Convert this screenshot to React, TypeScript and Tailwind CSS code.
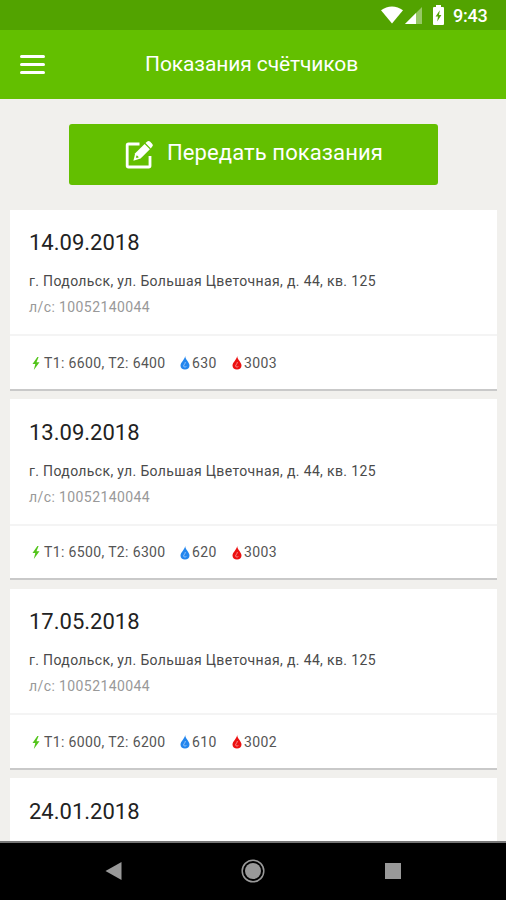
import React from "react";

type Reading = {
  date: string;
  values?: { t1: number; t2: number; cold: number; hot: number };
};

const readings: Reading[] = [
  { date: "14.09.2018", values: { t1: 6600, t2: 6400, cold: 630, hot: 3003 } },
  { date: "13.09.2018", values: { t1: 6500, t2: 6300, cold: 620, hot: 3003 } },
  { date: "17.05.2018", values: { t1: 6000, t2: 6200, cold: 610, hot: 3002 } },
  { date: "24.01.2018" },
];

function Drop({ className }: { className: string }) {
  return (
    <svg viewBox="0 0 10 14" className={`h-[14px] w-[10px] shrink-0 ${className}`}>
      <path d="M5.2 0C5.2 3.6 9.5 6.2 9.5 9.5C9.5 12 7.6 13.6 5 13.6S.5 12 .5 9.5C.5 6.6 4.4 4 5.2 0Z" fill="currentColor" />
      <path d="M5.4 6C5.2 8 3.6 8.6 3.6 10.2C3.9 11.2 5.6 11.2 6.4 10.5" fill="none" stroke="white" strokeWidth="0.9" opacity="0.55" />
    </svg>
  );
}

function StatusBar() {
  return (
    <div className="flex h-[30px] shrink-0 items-center bg-[#52a300] pl-[381px] text-white">
      <svg viewBox="0 0 22 18" className="h-[18px] w-[22px]">
        <path d="M0 4.3C6.5-.9 15.5-.9 22 4.3L11 17.5Z" fill="currentColor" />
      </svg>
      <svg viewBox="0 0 18 17" className="ml-[2px] h-[17px] w-[18px]">
        <path d="M17 0V17H0Z" fill="currentColor" opacity="0.4" />
        <path d="M11 6V17H0Z" fill="currentColor" />
      </svg>
      <svg viewBox="0 0 11 20" className="ml-[10px] h-[20px] w-[11px]">
        <path d="M3 0H8V2H10Q11 2 11 3V19Q11 20 10 20H1Q0 20 0 19V3Q0 2 1 2H3Z" fill="currentColor" />
        <path d="M6.8 5.2L2.6 11.5H5L4.2 16.5L8.4 10H6Z" fill="#52a300" />
      </svg>
      <span className="ml-[9px] pt-[2px] text-[18px] font-medium leading-none tracking-[-0.2px]">9:43</span>
    </div>
  );
}

function Card({ date, values }: Reading) {
  return (
    <article className="mb-[8.5px] h-[181px] shrink-0 border-b-2 border-[#c9c9c9] bg-white">
      <div className={`pl-[19px] pt-[20.4px] ${values ? "h-[126.4px] border-b-2 border-[#f4f4f4]" : ""}`}>
        <h2 className="text-[22px] leading-[26px] text-[#222]">{date}</h2>
        {values && (
          <>
            <p className="mt-[15px] whitespace-nowrap text-[14px] leading-[20px] tracking-[0.36px] text-[#4a4a4a]">
              г. Подольск, ул. Большая Цветочная, д. 44, кв. 125
            </p>
            <p className="mt-[6px] text-[14px] leading-[20px] tracking-[0.4px] text-[#999]">л/с: 10052140044</p>
          </>
        )}
      </div>
      {values && (
        <div className="flex h-[52.6px] items-center pl-[22px] pt-[2px] text-[14px] tracking-[0.36px] text-[#555]">
          <svg viewBox="0 0 8 13" className="h-[13px] w-[8px]">
            <path d="M5.4 0L.5 7H3.3L1.8 13L7.5 5.2H4.5L6.6 0Z" fill="#52c41a" />
          </svg>
          <span className="ml-[4px] w-[136px] whitespace-nowrap">T1: {values.t1}, T2: {values.t2}</span>
          <Drop className="text-[#2386ee]" />
          <span className="ml-[2px] w-[40px]">{values.cold}</span>
          <Drop className="text-[#ec1111]" />
          <span className="ml-[2px]">{values.hot}</span>
        </div>
      )}
    </article>
  );
}

export default function App() {
  return (
    <div className="flex h-[900px] w-[506px] flex-col overflow-hidden bg-[#f1f0ed] font-['Roboto','Noto_Sans',sans-serif]">
      <StatusBar />
      <header className="flex h-[69px] shrink-0 items-center bg-[#63bf00] pl-[20px] text-white">
        <div className="flex w-[125px] flex-col gap-[5px]">
          <span className="h-[3px] w-[25px] rounded-full bg-white" />
          <span className="h-[3px] w-[25px] rounded-full bg-white" />
          <span className="h-[3px] w-[25px] rounded-full bg-white" />
        </div>
        <h1 className="whitespace-nowrap pb-[2px] text-[21px] leading-[28px] tracking-[-0.1px]">Показания счётчиков</h1>
      </header>
      <main className="flex min-h-0 flex-1 flex-col overflow-hidden pl-[10px] pr-[9px] pt-[25px]">
        <button className="mb-[24.7px] ml-[59px] flex h-[61px] w-[369px] shrink-0 items-center rounded-[3px] bg-[#63bf00] pl-[56px] text-white">
          <svg viewBox="0 0 28 28" className="h-[28px] w-[28px]">
            <path d="M14.5 3H3.5Q2.2 3 2.2 4.3V24.7Q2.2 26 3.5 26H23.7Q25 26 25 24.7V15" fill="none" stroke="currentColor" strokeWidth="2.8" />
            <path d="M19.6 3L24.9 8.3L15.6 17.4L8.4 19.8L10.2 12.2Z" fill="currentColor" />
            <path d="M20.5 2.1L22.2.6Q23.6-.5 25 .6L27.3 2.9Q28.4 4.2 27.2 5.6L25.8 7.4Z" fill="currentColor" />
            <path d="M11.8 14.2L13.9 16.3L11.8 17.1L10.9 16.2Z" fill="#63bf00" />
          </svg>
          <span className="ml-[14px] whitespace-nowrap pb-[5px] text-[22px] tracking-[0.1px]">Передать показания</span>
        </button>
        {readings.map((r) => (
          <Card key={r.date} {...r} />
        ))}
      </main>
      <nav className="flex h-[59px] shrink-0 items-center border-t-2 border-[#777] bg-black pb-[2px] pl-[105px] text-[#999]">
        <svg viewBox="0 0 17 18" className="h-[18px] w-[17px]">
          <path d="M16.5 0V18L.5 9Z" fill="currentColor" />
        </svg>
        <svg viewBox="0 0 24 24" className="ml-[119px] h-[24px] w-[24px]">
          <circle cx="12" cy="12" r="10.8" fill="none" stroke="currentColor" strokeWidth="1.5" />
          <circle cx="12" cy="12" r="8" fill="currentColor" />
        </svg>
        <span className="ml-[120px] h-[16px] w-[16px] bg-[#999]" />
      </nav>
    </div>
  );
}
